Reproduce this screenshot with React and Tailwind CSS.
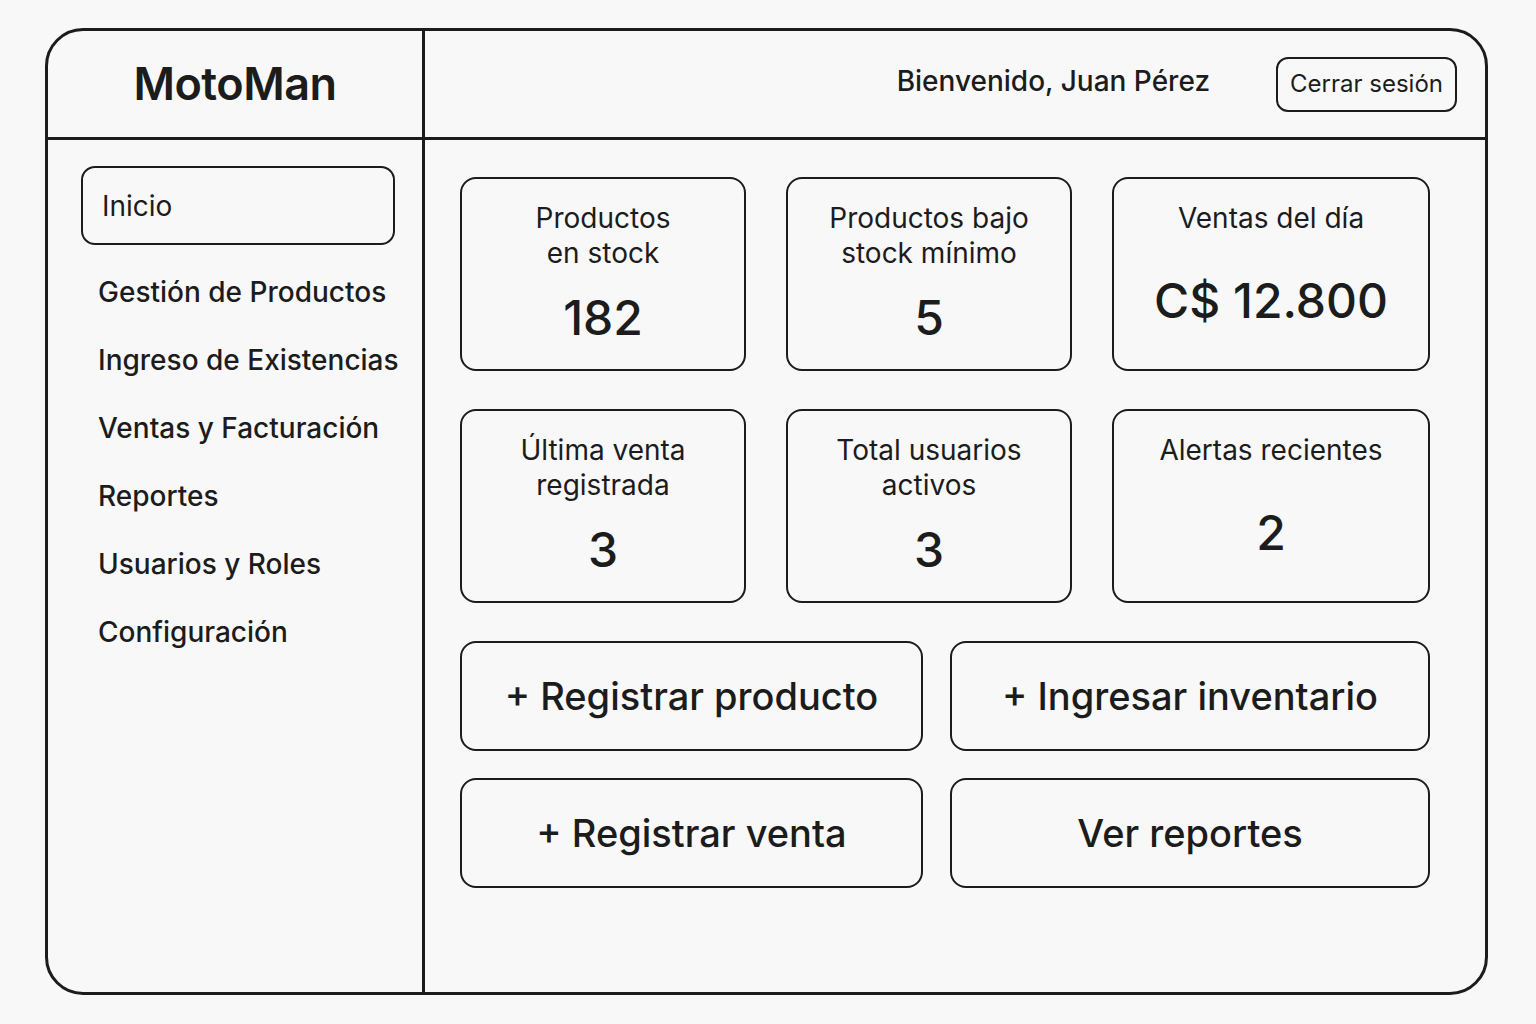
const stats = [
  { title: ['Productos', 'en stock'], value: '182', w: 'w-[286px]' },
  { title: ['Productos bajo', 'stock mínimo'], value: '5', w: 'w-[286px]' },
  { title: ['Ventas del día'], value: 'C$ 12.800', w: 'w-[318px]' },
  { title: ['Última venta', 'registrada'], value: '3', w: 'w-[286px]' },
  { title: ['Total usuarios', 'activos'], value: '3', w: 'w-[286px]' },
  { title: ['Alertas recientes'], value: '2', w: 'w-[318px]' },
];

const navItems = [
  'Gestión de Productos',
  'Ingreso de Existencias',
  'Ventas y Facturación',
  'Reportes',
  'Usuarios y Roles',
  'Configuración',
];

const actions = [
  { label: '+ Registrar producto', w: 'w-[463px]' },
  { label: '+ Ingresar inventario', w: 'w-[480px]' },
  { label: '+ Registrar venta', w: 'w-[463px]' },
  { label: 'Ver reportes', w: 'w-[480px]' },
];

function StatCard({ title, value, w }) {
  return (
    <div className={`${w} h-[194px] border-2 border-[#1c1c1c] rounded-[16px] flex flex-col items-center pt-[22px]`}>
      <div className="text-[28px] leading-[35px] text-center">
        {title.map(line => <div key={line}>{line}</div>)}
      </div>
      <div className="flex-1 flex items-center justify-center pb-[4px]">
        <span className="text-[48px] font-medium leading-none">{value}</span>
      </div>
    </div>
  );
}

export default function App() {
  return (
    <div className="w-[1536px] h-[1024px] bg-[#f8f8f8] text-[#1c1c1c] pt-[28px] pl-[45px]" style={{ fontFamily: 'Inter, "Liberation Sans", sans-serif' }}>
      <div className="w-[1443px] h-[967px] border-[3px] border-[#1c1c1c] rounded-[38px] overflow-hidden flex">
        {/* Sidebar */}
        <aside className="w-[377px] border-r-[3px] border-[#1c1c1c] flex flex-col">
          <div className="h-[109px] border-b-[3px] border-[#1c1c1c] flex items-center justify-center">
            <span className="text-[45px] font-semibold tracking-[-0.5px]">MotoMan</span>
          </div>
          <nav className="pt-[26px] pl-[33px] pr-[27px]">
            <div className="h-[79px] border-2 border-[#1c1c1c] rounded-[14px] flex items-center pl-[19px] text-[28px]">
              Inicio
            </div>
            <ul className="mt-[13px]">
              {navItems.map(item => (
                <li key={item} className="h-[68px] flex items-center pl-[17px] text-[28px] font-medium whitespace-nowrap">
                  {item}
                </li>
              ))}
            </ul>
          </nav>
        </aside>

        {/* Main */}
        <div className="flex-1 flex flex-col">
          <header className="h-[109px] border-b-[3px] border-[#1c1c1c] flex items-center justify-end pr-[28px]">
            <span className="text-[28px] font-medium mr-[66px] -mt-[6px]">Bienvenido, Juan Pérez</span>
            <button className="h-[55px] px-[12px] border-2 border-[#1c1c1c] rounded-[12px] text-[24px]">
              Cerrar sesión
            </button>
          </header>

          <main className="pt-[37px] pl-[35px]">
            <div className="grid grid-cols-[286px_286px_318px] gap-x-[40px] gap-y-[38px] w-[970px]">
              {stats.map(s => (
                <StatCard key={s.title.join()} {...s} />
              ))}
            </div>

            <div className="grid grid-cols-[463px_480px] gap-x-[27px] gap-y-[27px] mt-[38px] w-[970px]">
              {actions.map(a => (
                <button key={a.label} className={`${a.w} h-[110px] border-2 border-[#1c1c1c] rounded-[16px] flex items-center justify-center text-[38px] font-medium`}>
                  {a.label}
                </button>
              ))}
            </div>
          </main>
        </div>
      </div>
    </div>
  );
}
